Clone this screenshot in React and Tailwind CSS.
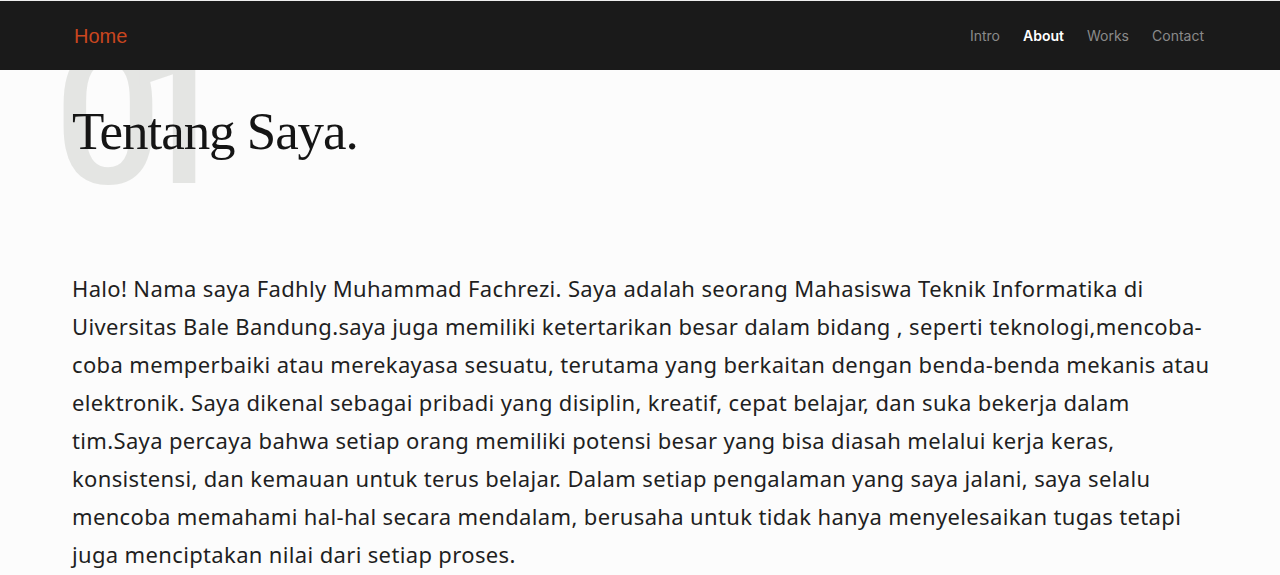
import React from 'react'

const NAV = [
  { label: 'Intro', active: false },
  { label: 'About', active: true },
  { label: 'Works', active: false },
  { label: 'Contact', active: false },
]

const ABOUT =
  'Halo! Nama saya Fadhly Muhammad Fachrezi. Saya adalah seorang Mahasiswa Teknik Informatika di Uiversitas Bale Bandung.saya juga memiliki ketertarikan besar dalam bidang , seperti teknologi,mencoba-coba memperbaiki atau merekayasa sesuatu, terutama yang berkaitan dengan benda-benda mekanis atau elektronik. Saya dikenal sebagai pribadi yang disiplin, kreatif, cepat belajar, dan suka bekerja dalam tim.Saya percaya bahwa setiap orang memiliki potensi besar yang bisa diasah melalui kerja keras, konsistensi, dan kemauan untuk terus belajar. Dalam setiap pengalaman yang saya jalani, saya selalu mencoba memahami hal-hal secara mendalam, berusaha untuk tidak hanya menyelesaikan tugas tetapi juga menciptakan nilai dari setiap proses.'

export default function App() {
  return (
    <div className="min-h-screen overflow-hidden bg-[#fcfcfc] text-[#1c1c1c]" style={{ fontFamily: '"Noto Sans", sans-serif' }}>
      <header className="relative z-10 h-[70px] border-t border-[#eeeeee] bg-[#1a1a1a]">
        <div className="mx-auto flex h-full max-w-[1136px] items-center justify-between pr-[3px]">
          <a className="pl-[2px] text-[20px] text-[#c9461f]" style={{ fontFamily: '"Liberation Sans", sans-serif' }}>Home</a>
          <nav className="ml-auto mr-[1px] flex items-center gap-[23px] text-[14px]" style={{ fontFamily: 'Inter, sans-serif' }}>
            {NAV.map(n => (
              <a key={n.label} className={n.active ? 'font-semibold text-white' : 'text-[#8a8a8a]'}>{n.label}</a>
            ))}
          </nav>
        </div>
      </header>

      <main className="mx-auto max-w-[1136px]">
        <section className="relative pt-[35px]">
          {/* big faded section number behind the title */}
          <span
            aria-hidden="true"
            className="pointer-events-none absolute left-[-18px] top-[-47px] flex select-none text-[190px] font-medium leading-none text-[#e4e5e3]"
            style={{ fontFamily: 'Roboto, sans-serif' }}
          >
            <span>0</span>
            <span className="ml-[-38px]">1</span>
          </span>
          <h1
            className="relative text-[53px] leading-none tracking-[-0.02em] text-[#151515]"
            style={{ fontFamily: '"Liberation Serif", serif' }}
          >
            Tentang Saya.
          </h1>
        </section>

        <p className="mr-[-8px] pt-[111px] text-[22px] leading-[38px] tracking-[0.35px] text-[#1f1f1f]">{ABOUT}</p>
      </main>
    </div>
  )
}
